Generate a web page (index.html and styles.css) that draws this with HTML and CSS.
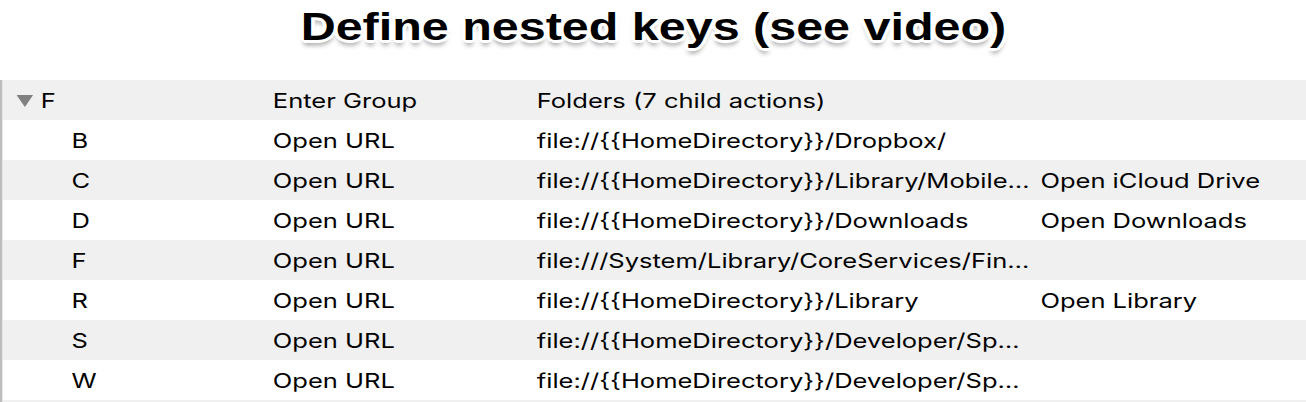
FILE: index.html
```html
<!DOCTYPE html>
<html>
<head>
<meta charset="utf-8">
<link rel="stylesheet" href="styles.css">
</head>
<body>
<div class="page">
  <h1 class="title">Define nested keys (see video)</h1>
  <div class="table">
    <div class="row alt">
      <div class="cell key parent"><svg class="tri" width="13" height="12" viewBox="0 0 13 12"><polygon points="0,0 13,0 6.5,12" fill="#808080"/></svg><span>F</span></div>
      <div class="cell">Enter Group</div>
      <div class="cell">Folders (7 child actions)</div>
      <div class="cell"></div>
    </div>
    <div class="row">
      <div class="cell key child">B</div>
      <div class="cell">Open URL</div>
      <div class="cell">file://{{HomeDirectory}}/Dropbox/</div>
      <div class="cell"></div>
    </div>
    <div class="row alt">
      <div class="cell key child">C</div>
      <div class="cell">Open URL</div>
      <div class="cell">file://{{HomeDirectory}}/Library/Mobile…</div>
      <div class="cell">Open iCloud Drive</div>
    </div>
    <div class="row">
      <div class="cell key child">D</div>
      <div class="cell">Open URL</div>
      <div class="cell">file://{{HomeDirectory}}/Downloads</div>
      <div class="cell">Open Downloads</div>
    </div>
    <div class="row alt">
      <div class="cell key child">F</div>
      <div class="cell">Open URL</div>
      <div class="cell">file:///System/Library/CoreServices/Fin…</div>
      <div class="cell"></div>
    </div>
    <div class="row">
      <div class="cell key child">R</div>
      <div class="cell">Open URL</div>
      <div class="cell">file://{{HomeDirectory}}/Library</div>
      <div class="cell">Open Library</div>
    </div>
    <div class="row alt">
      <div class="cell key child">S</div>
      <div class="cell">Open URL</div>
      <div class="cell">file://{{HomeDirectory}}/Developer/Sp…</div>
      <div class="cell"></div>
    </div>
    <div class="row">
      <div class="cell key child">W</div>
      <div class="cell">Open URL</div>
      <div class="cell">file://{{HomeDirectory}}/Developer/Sp…</div>
      <div class="cell"></div>
    </div>
    <div class="stub"></div>
  </div>
</div>
</body>
</html>
```
FILE: styles.css
```css
html, body {
  margin: 0;
  padding: 0;
  background: #ffffff;
  overflow: hidden;
}

body {
  width: 1306px;
  height: 402px;
}

.page {
  width: 1025px;
  transform: scaleX(1.275);
  transform-origin: 0 0;
  font-family: "Inter", "Liberation Sans", Arial, sans-serif;
  color: #000;
}

.title {
  margin: 0;
  height: 80px;
  box-sizing: border-box;
  padding-top: 3px;
  font-family: "Liberation Sans", Arial, sans-serif;
  font-size: 38px;
  line-height: 48px;
  font-weight: bold;
  text-align: center;
  text-shadow:
    -2px -2px 0 #fff,
    2px -2px 0 #fff,
    -2px 2px 0 #fff,
    2px 2px 0 #fff,
    0 -3px 0 #fff,
    0 3px 0 #fff,
    -3px 0 0 #fff,
    3px 0 0 #fff,
    0 5px 5px rgba(0, 0, 0, 0.4);
}

.table {
  border-left: 2px solid #bdbdbd;
}

.row {
  display: grid;
  grid-template-columns: 212px 207px 395px 1fr;
  height: 40px;
  box-sizing: border-box;
  padding-top: 5px;
  font-size: 20px;
  line-height: 32px;
  background: #ffffff;
}

.row.alt {
  background: #f0f0f0;
}

.stub {
  height: 2px;
  background: #f0f0f0;
}

.cell {
  white-space: nowrap;
  overflow: hidden;
}

.key.child {
  padding-left: 54px;
}

.key.parent {
  display: flex;
  align-items: flex-start;
  padding-left: 11px;
}

.tri {
  flex: none;
  margin-top: 10px;
  margin-right: 6px;
}
```
